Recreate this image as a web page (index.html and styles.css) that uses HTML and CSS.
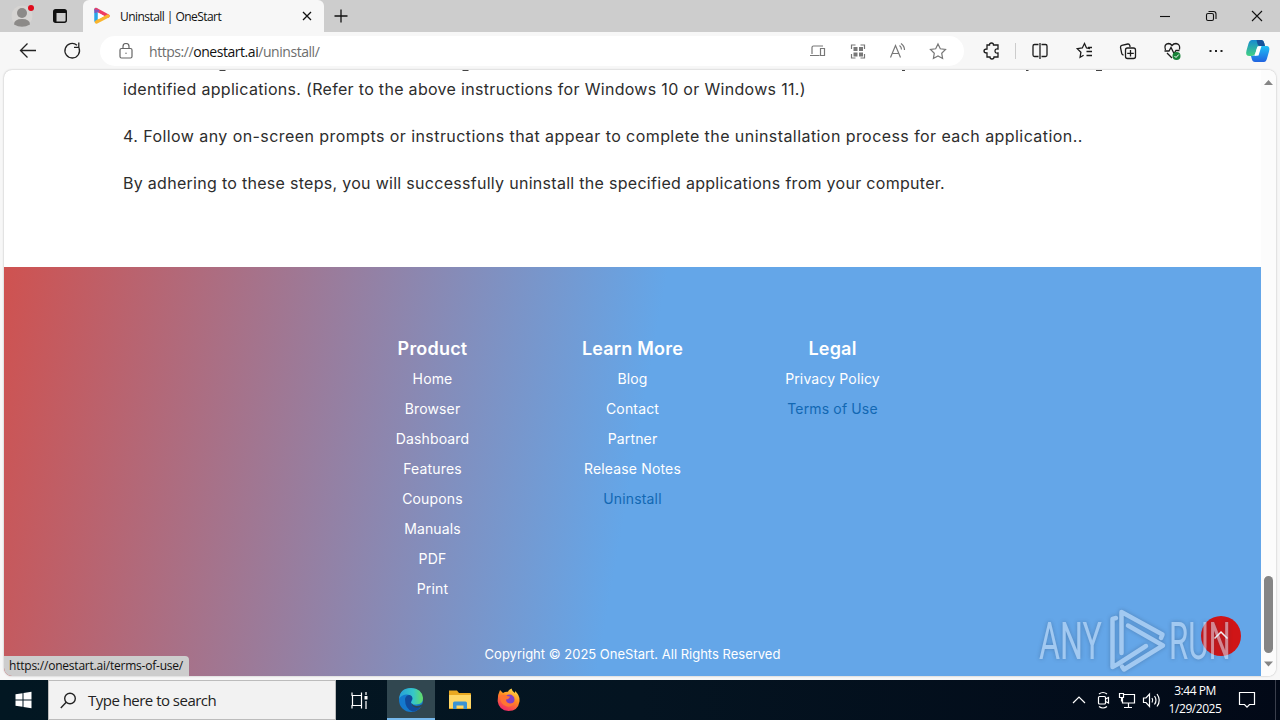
FILE: index.html
```html
<!DOCTYPE html>
<html lang="en">

<head>
    <meta charset="UTF-8">
    <meta name="viewport" content="width=device-width, initial-scale=1.0">
    <title>Uninstall | OneStart</title>

    <link rel="stylesheet" href="styles.css">

</head>

<body>

    <!-- Tab strip -->
    <div id="tab-strip">
        <div class="strip-left">
            <svg width="84" height="32" viewBox="0 0 84 32">
                <circle cx="22" cy="16" r="10.5" fill="#d6d4d2" />
                <circle cx="22" cy="13" r="5" fill="#8c8a88" />
                <path d="M14 24.500q0-5.500 8-5.500t8 5.500q-8 4.500-16 0z" fill="#8c8a88" />
                <circle cx="31" cy="8" r="3" fill="#e00b1c" />
                <rect x="53.700" y="9.700" width="12.600" height="12.600" rx="2" fill="none" stroke="#111" stroke-width="1.400" />
                <path d="M54 10h12v3H54zM54 12h2.500v10H54z" fill="#111" />
            </svg>
        </div>
        <div class="tab">
            <svg width="18" height="18" viewBox="0 0 18 18">
                <path d="M3 2.500V14" stroke="#2ba6e8" stroke-width="3.500" stroke-linecap="round" />
                <path d="M3 2.500L15 9" stroke="#ef3c62" stroke-width="3.500" stroke-linecap="round" />
                <path d="M3.500 15L15 9" stroke="#f9b52e" stroke-width="3.500" stroke-linecap="round" />
                <path d="M2.500 6V3.500L6 4" stroke="#8655bd" stroke-width="2" fill="none" />
                <path d="M5.200 5.800v6.500L11 9z" fill="#fff" />
            </svg>
            <span class="tab-title">Uninstall | OneStart</span>
            <svg class="tab-close" width="10" height="10" viewBox="0 0 10 10">
                <path d="M1 1l8 8M9 1L1 9" stroke="#111" stroke-width="1.300" />
            </svg>
        </div>
        <svg class="new-tab" width="14" height="14" viewBox="0 0 14 14">
            <path d="M7 .5v13M.5 7h13" stroke="#111" stroke-width="1.300" />
        </svg>
        <svg class="window-buttons" width="120" height="32" viewBox="0 0 120 32" fill="none" stroke="#111" stroke-width="1.100">
            <path d="M0 16.500h10" />
            <rect x="46.500" y="13.500" width="7" height="7" rx="1.500" />
            <path d="M48.500 11.500h5q2.500 0 2.500 2.500v5" />
            <path d="M92 11l10 10M102 11L92 21" />
        </svg>
    </div>

    <!-- Address bar -->
    <div id="toolbar">
        <svg class="nav-icons" width="100" height="38" viewBox="0 0 100 38" fill="none" stroke="#222" stroke-width="1.300">
            <path d="M36 18.500H20.500M27.500 11.500l-7 7 7 7" />
            <path d="M79 16A7.300 7.300 0 1 1 77 13.200M78.800 10.500v4.800H74" />
        </svg>
        <div class="address">
            <svg width="14" height="16" viewBox="0 0 14 16" fill="none" stroke="#666" stroke-width="1.200">
                <rect x="1" y="5.500" width="12" height="9.500" rx="1.500" />
                <path d="M4 5.500V3.500a3 3 0 0 1 6 0v2" />
                <circle cx="7" cy="10.200" r=".7" fill="#666" stroke="none" />
            </svg>
            <span class="url">https://<b>onestart.ai</b>/uninstall/</span>
            <svg class="address-icons" width="140" height="30" viewBox="0 0 140 30" fill="none" stroke="#777" stroke-width="1.200">
                <path d="M14 10H4.500Q3 10 3 11.500V18M1 19.500h9.500M11.500 12.500h4v7h-4z" />
                <path d="M46.500 9H42.500v4M51.500 9h4v4M42.500 18v4h4M55.500 18v4h-4" />
                <path d="M44.500 11h4v4h-4zM50 11h4v4h-4zM44.500 16.500h4v4h-4zM50 16.500h4v4h-4z" fill="#777" stroke="none" />
                <path d="M81.500 21.500l5-12 5 12M83.200 17.500h6.600M90.500 9.500q2 1.500 2 4M92 7.500q3.500 2.500 3.500 6.500" />
                <path d="M129 8l2.300 4.800 5.200.7-3.800 3.700.9 5.300-4.600-2.500-4.600 2.500.9-5.300-3.800-3.700 5.200-.7z" />
            </svg>
        </div>
        <svg class="toolbar-icons" width="316" height="38" viewBox="964 32 316 38" fill="none" stroke="#1c1c1c" stroke-width="1.300">
            <path d="M987 45h2.500q0-2 2-2t2 2H998v4q-3-.5-3 2t3 2v4h-4q0 2-2 2t-2-2h-3v-4q-3 0-3-2t3-2z" />
            <path d="M1015.500 43v16" stroke="#ccc" stroke-width="1" />
            <path d="M1038.500 44.500h-4q-1.500 0-1.500 1.500v9q0 1.500 1.500 1.500h4M1041.500 44.500h4q1.500 0 1.500 1.500v9q0 1.500-1.500 1.500h-4M1040 43v16" />
            <path d="M1090 48.500l-3.500-.5-2-4.500-2.200 4.500-5 .7 3.600 3.500-.8 5 3.500-2M1086.500 51.500h5.500M1086.500 55.500h5.500M1088 47.500h4" />
            <path d="M1123.500 55q-1.500-.2-1.800-1.700l-1.200-6q-.2-1.500 1.300-2l6-1.300q1.500-.2 2 1.500l.3 1.500" />
            <rect x="1125.500" y="48" width="10" height="10.500" rx="2" />
            <path d="M1130.500 50v6.500M1127.200 53.300h6.600" />
            <path d="M1165.500 50q-2-6 3-6.500 2 0 3.500 2 1.500-2 4-2 4.500.5 3.500 6M1164.500 51h4.500l2-3.500 3 6 2-3h3.500M1167 53l5 5" />
            <circle cx="1176.500" cy="56" r="4" fill="#178238" stroke="none" />
            <path d="M1174.500 56l1.500 1.500 2.800-3" stroke="#fff" stroke-width="1" />
            <path d="M1209.500 50h2v2h-2zM1215 50h2v2h-2zM1220.500 50h2v2h-2z" fill="#222" stroke="none" />
            <defs>
                <linearGradient id="copilot-left" x1="0" y1="0" x2="0" y2="1">
                    <stop offset="0" stop-color="#178bd0" />
                    <stop offset="1" stop-color="#42d183" />
                </linearGradient>
                <linearGradient id="copilot-right" x1="0" y1="0" x2="0" y2="1">
                    <stop offset="0" stop-color="#1fc0f5" />
                    <stop offset="1" stop-color="#2163e0" />
                </linearGradient>
            </defs>
            <path d="M1252 40h9q2.500 0 3.200 3l.8 3h-5q-2.500 0-3 2l-1.500 5q-1 3-4 3h-2q-4.500 0-3-5.500l2-7q1-3.500 3.500-3.500z" fill="url(#copilot-left)" stroke="none" />
            <path d="M1264 62h-9q-2.500 0-3.200-3l-.8-3q4.500.3 5.500-3l1.500-4.500q1-2.500 3.500-2.500h5q4 0 2.500 5.500l-2 7q-1 3.500-3 3.500z" fill="url(#copilot-right)" stroke="none" />
            <path d="M1256.500 40h5q2 0 2.700 3l.8 3h-5q-2 0-2.500-2z" fill="#17529a" stroke="none" />
            <path d="M1257.500 46.500l4-.5-3 9.500-4 .5z" fill="#fff" stroke="none" />
        </svg>
    </div>

    <!-- Web page -->
    <div id="viewport">
        <div id="page">
            <div class="content">
                <svg class="cut-line" width="1100" height="2" viewBox="123 0 1100 2">
                    <path d="M219.500.5h6M462.500.5h6M902 .5h3M1026 .5h2.500M1096 .5h6" stroke="#444" />
                </svg>
                <p class="line-a">identified applications. (Refer to the above instructions for Windows 10 or Windows 11.)</p>
                <p class="line-b">4. Follow any on-screen prompts or instructions that appear to complete the uninstallation process for each application..</p>
                <p class="line-c">By adhering to these steps, you will successfully uninstall the specified applications from your computer.</p>
            </div>
            <footer>
                <div class="footer-columns">
                    <div class="column">
                        <h3>Product</h3>
                        <a>Home</a>
                        <a>Browser</a>
                        <a>Dashboard</a>
                        <a>Features</a>
                        <a>Coupons</a>
                        <a>Manuals</a>
                        <a>PDF</a>
                        <a>Print</a>
                    </div>
                    <div class="column">
                        <h3>Learn More</h3>
                        <a>Blog</a>
                        <a>Contact</a>
                        <a>Partner</a>
                        <a>Release Notes</a>
                        <a class="current">Uninstall</a>
                    </div>
                    <div class="column">
                        <h3>Legal</h3>
                        <a>Privacy Policy</a>
                        <a class="current">Terms of Use</a>
                    </div>
                </div>
                <div class="copyright">Copyright © 2025 OneStart. All Rights Reserved</div>
            </footer>
        </div>
        <svg class="scrollbar" width="15" height="606" viewBox="0 0 15 606">
            <path d="M3 15l4.500-5 4.500 5z" fill="#858585" />
            <rect x="3" y="506" width="9" height="77" rx="4.500" fill="#858585" />
            <path d="M3 591.500l4.500 5 4.500-5z" fill="#858585" />
        </svg>
        <div id="status">https://onestart.ai/terms-of-use/</div>
        <svg class="to-top" width="40" height="40" viewBox="0 0 40 40">
            <circle cx="20" cy="20" r="20" fill="#d01517" />
            <path d="M13.500 22.500l6.500-6.500 6.500 6.500" fill="none" stroke="#fff" stroke-width="1.500" />
        </svg>
        <svg class="watermark" width="210" height="70" viewBox="1030 606 210 70">
            <text transform="translate(1039 659) scale(.62 1)">ANY</text>
            <text transform="translate(1169 659) scale(.6 1)">RUN</text>
            <g fill="none" stroke-width="4.500" stroke-linejoin="round" stroke-linecap="round">
                <path d="M1116 618l-3.500 1v48l5.500-3 28-18" />
                <path d="M1121.500 653v-41l41 22.500-1.500 3.500" />
                <path d="M1128 625.500l35 20-39 24-2-3" />
            </g>
        </svg>
    </div>

    <!-- Taskbar -->
    <div id="taskbar">
        <svg class="start" width="48" height="40" viewBox="0 0 48 40">
            <path d="M15.500 14.200l7-1v6.300h-7zM23.500 13l8-1.200v7.700h-8zM15.500 20.500h7v6.300l-7-1zM23.500 20.500h8v7.700l-8-1.200z" fill="#fff" />
        </svg>
        <div class="search">
            <svg width="17" height="17" viewBox="0 0 17 17" fill="none" stroke="#222" stroke-width="1.400">
                <circle cx="10" cy="6.500" r="5.300" />
                <path d="M6.200 10.300L.8 16" />
            </svg>
            <span>Type here to search</span>
        </div>
        <svg class="apps" width="200" height="40" viewBox="336 680 200 40">
            <path d="M352 692.500v3h9.500v-3M352 708.500v-3h9.500v3M352.500 695.500v10M361.500 695.500v10M366 692v3M366 701v8" fill="none" stroke="#fff" stroke-width="1.200" />
            <path d="M364.500 696h3v3.500h-3z" fill="#fff" />
            <rect x="387" y="680" width="48" height="40" fill="#314750" />
            <rect x="387" y="718" width="48" height="2" fill="#76b9ed" />
            <defs>
                <linearGradient id="edge-top">
                    <stop offset="0" stop-color="#269fda" />
                    <stop offset=".6" stop-color="#36c7c8" />
                    <stop offset="1" stop-color="#65dc63" />
                </linearGradient>
                <linearGradient id="fox" x1=".8" y1="0" x2=".3" y2="1">
                    <stop offset="0" stop-color="#ffe14b" />
                    <stop offset=".45" stop-color="#ff8a20" />
                    <stop offset="1" stop-color="#f0246c" />
                </linearGradient>
            </defs>
            <circle cx="411" cy="700" r="12" fill="#1479cd" />
            <path d="M399 699q1-11 12-11 11 .5 12 10 .2 6.500-7 6.500-4.500 0-5-2 2-2 1-4.500-1.500-4-6-3.500-5 .5-7 4.500z" fill="url(#edge-top)" />
            <path d="M405 699q1-4 4.500-4 3 .5 3 4-2 2-1.500 3.500.5 4 6 4 2.500 0 4.500-1-3.500 6-9 6-7.500-2.500-7.500-12.500z" fill="#114b9b" />
            <path d="M411.500 703q1 2.500 4.500 3 3.500.3 6.500-2l-1 2.500q-3 1.500-6 1-4-1-4-4.500z" fill="#314750" />
            <path d="M449 690.500h8l2 2.500h11q1 0 1 1v15h-22z" fill="#e9a820" />
            <path d="M449 695h22v13h-22z" fill="#ffd766" />
            <path d="M453 709v-6q0-1.500 1.500-1.500h11q1.500 0 1.500 1.500v6h-3.500v-3.500h-7v3.500z" fill="#3b93d3" />
            <path d="M500 690l3 3q2-1.500 5-1.300 1-2.200 3.500-3.200.5 3 3.500 4.500v-2q5 4 4.500 10.500Q518 711 508.500 711q-9.500-.5-10.800-9.500-.2-7 2.300-11.500z" fill="url(#fox)" />
            <circle cx="509.500" cy="699.500" r="5" fill="#8140c5" />
            <path d="M500 696q4-2.500 7 0l3 .5q-.5 2.500-4 3 0 3.500 4 4 3 0 5-2-2 6-8 5-7-1.500-7-10.500z" fill="#ff7432" />
        </svg>
        <svg class="tray" width="96" height="40" viewBox="1069 680 96 40" fill="none" stroke="#fff" stroke-width="1.200">
            <path d="M1073 703l6-6 6 6" />
            <rect x="1098.500" y="696.500" width="7" height="7.500" rx="1" />
            <path d="M1105.500 699l3-1.500v5.500l-3-1.500M1099 694q4-3 8 0M1099 706.500q4 3 8 0" />
            <path d="M1124 694.500h10.500v8.500h-12v-5M1128.500 703v4M1124 707.500h8M1119.500 693.500h4v4h-4zM1121.500 697.500v4" />
            <path d="M1143.500 698h2.500l3.500-4v12.500l-3.500-4h-2.500zM1152 698q1.500 2.300 0 4.500M1154.500 696q3 4.200 0 8.500M1157 694q4.500 6.200 0 12.500" />
        </svg>
        <div class="clock">
            <span class="time">3:44 PM</span>
            <span class="date">1/29/2025</span>
        </div>
        <svg class="notice" width="55" height="40" viewBox="1225 680 55 40" fill="none" stroke="#fff" stroke-width="1.200">
            <path d="M1239.500 692.500h15v12h-5l-2.500 2.700-2.500-2.700h-5z" />
            <path d="M1275.500 680v40" stroke="#3a3f4c" stroke-width="1" />
        </svg>
    </div>

</body>

</html>
```
FILE: styles.css
```css
body {
    margin: 0;
    width: 1280px;
    height: 720px;
    overflow: hidden;
    display: flex;
    flex-direction: column;
    background-color: #f7f7f7;
    font-family: "Open Sans", "Noto Sans", sans-serif;
    color: #111;
}

svg {
    display: block;
    flex: none;
}

/* Tab strip */
#tab-strip {
    display: flex;
    align-items: center;
    height: 32px;
    background-color: #cdcdcd;
}

.strip-left {
    width: 83px;
    overflow: hidden;
}

.tab {
    box-sizing: border-box;
    display: flex;
    align-items: center;
    width: 241px;
    height: 32px;
    padding: 0 12px 0 10px;
    border-radius: 6px 6px 0 0;
    background-color: #f7f7f7;
}

.tab-title {
    margin-left: 9px;
    font-size: 12px;
    letter-spacing: -0.55px;
    white-space: nowrap;
}

.tab-close {
    margin-left: auto;
}

.new-tab {
    margin-left: 10px;
}

.window-buttons {
    margin-left: auto;
}

/* Address bar */
#toolbar {
    display: flex;
    align-items: center;
    height: 38px;
}

.address {
    box-sizing: border-box;
    display: flex;
    align-items: center;
    width: 864px;
    height: 30px;
    padding: 0 15px 0 19px;
    border-radius: 15px;
    background-color: #fff;
}

.url {
    margin-left: 16px;
    font-size: 14px;
    letter-spacing: -0.45px;
    color: #6d6d6d;
}

.url b {
    font-weight: normal;
    color: #111;
}

.address-icons {
    margin-left: auto;
}

/* Web page */
#viewport {
    position: relative;
    display: flex;
    width: 1272px;
    height: 606px;
    margin-left: 4px;
    border-radius: 8px;
    overflow: hidden;
    background-color: #fff;
    box-shadow: 0 0 2px rgba(0, 0, 0, 0.3);
}

#page {
    width: 1257px;
    font-family: Inter, "Liberation Sans", sans-serif;
}

.content {
    box-sizing: border-box;
    height: 197px;
    padding-left: 119px;
}

.content p {
    margin: 0 0 23px;
    font-size: 16px;
    line-height: 24px;
    color: #2d2d2d;
    white-space: nowrap;
}

.content .cut-line + p {
    margin-top: 5px;
}

.content .line-a {
    letter-spacing: 0.31px;
}

.content .line-b {
    letter-spacing: 0.43px;
}

.content .line-c {
    letter-spacing: 0.29px;
}

footer {
    box-sizing: border-box;
    height: 409px;
    padding-top: 66px;
    background: linear-gradient(100deg, #cf5250, #64a6e8 50%);
    color: #fff;
    text-align: center;
}

.footer-columns {
    display: flex;
    justify-content: center;
    height: 309px;
}

.column {
    display: flex;
    flex-direction: column;
    width: 200px;
}

.column h3 {
    margin: 0;
    font-size: 18px;
    font-weight: 600;
    line-height: 31px;
    letter-spacing: 0.2px;
}

.column a {
    font-size: 14px;
    line-height: 30px;
    letter-spacing: 0.15px;
}

.column .current {
    color: #1268b3;
}

.copyright {
    font-size: 13px;
    line-height: 24px;
}

.scrollbar {
    background-color: #fcfcfc;
}

/* Link preview over the page corner */
#status {
    position: absolute;
    left: 0;
    bottom: 0;
    box-sizing: border-box;
    width: 185px;
    height: 20px;
    padding-left: 5px;
    border-radius: 0 4px 0 8px;
    background-color: #cdcdcd;
    font-size: 12px;
    line-height: 19px;
    letter-spacing: -0.22px;
    white-space: nowrap;
}

.to-top {
    position: absolute;
    left: 1197px;
    top: 546px;
}

.watermark {
    position: absolute;
    left: 1026px;
    top: 536px;
    opacity: 0.55;
    filter: drop-shadow(0 0 2px rgba(40, 60, 90, 0.6));
}

.watermark text {
    font-family: Roboto, sans-serif;
    font-size: 52px;
    fill: #d6e6f8;
}

.watermark g {
    stroke: #d6e6f8;
}

/* Taskbar */
#taskbar {
    display: flex;
    align-items: center;
    height: 40px;
    margin-top: 4px;
    background: linear-gradient(90deg, #021722, #041421 50%, #020917);
    color: #fff;
}

.search {
    box-sizing: border-box;
    display: flex;
    align-items: center;
    width: 288px;
    height: 40px;
    padding-left: 11px;
    border: 1px solid #bcbcbc;
    background-color: #f2f2f2;
    color: #222;
}

.search span {
    margin-left: 11px;
    font-size: 15px;
    letter-spacing: -0.52px;
}

.tray {
    margin-left: auto;
}

.clock {
    display: flex;
    flex-direction: column;
    align-items: center;
    width: 60px;
    font-size: 12px;
    line-height: 18px;
    letter-spacing: -0.45px;
}
```
